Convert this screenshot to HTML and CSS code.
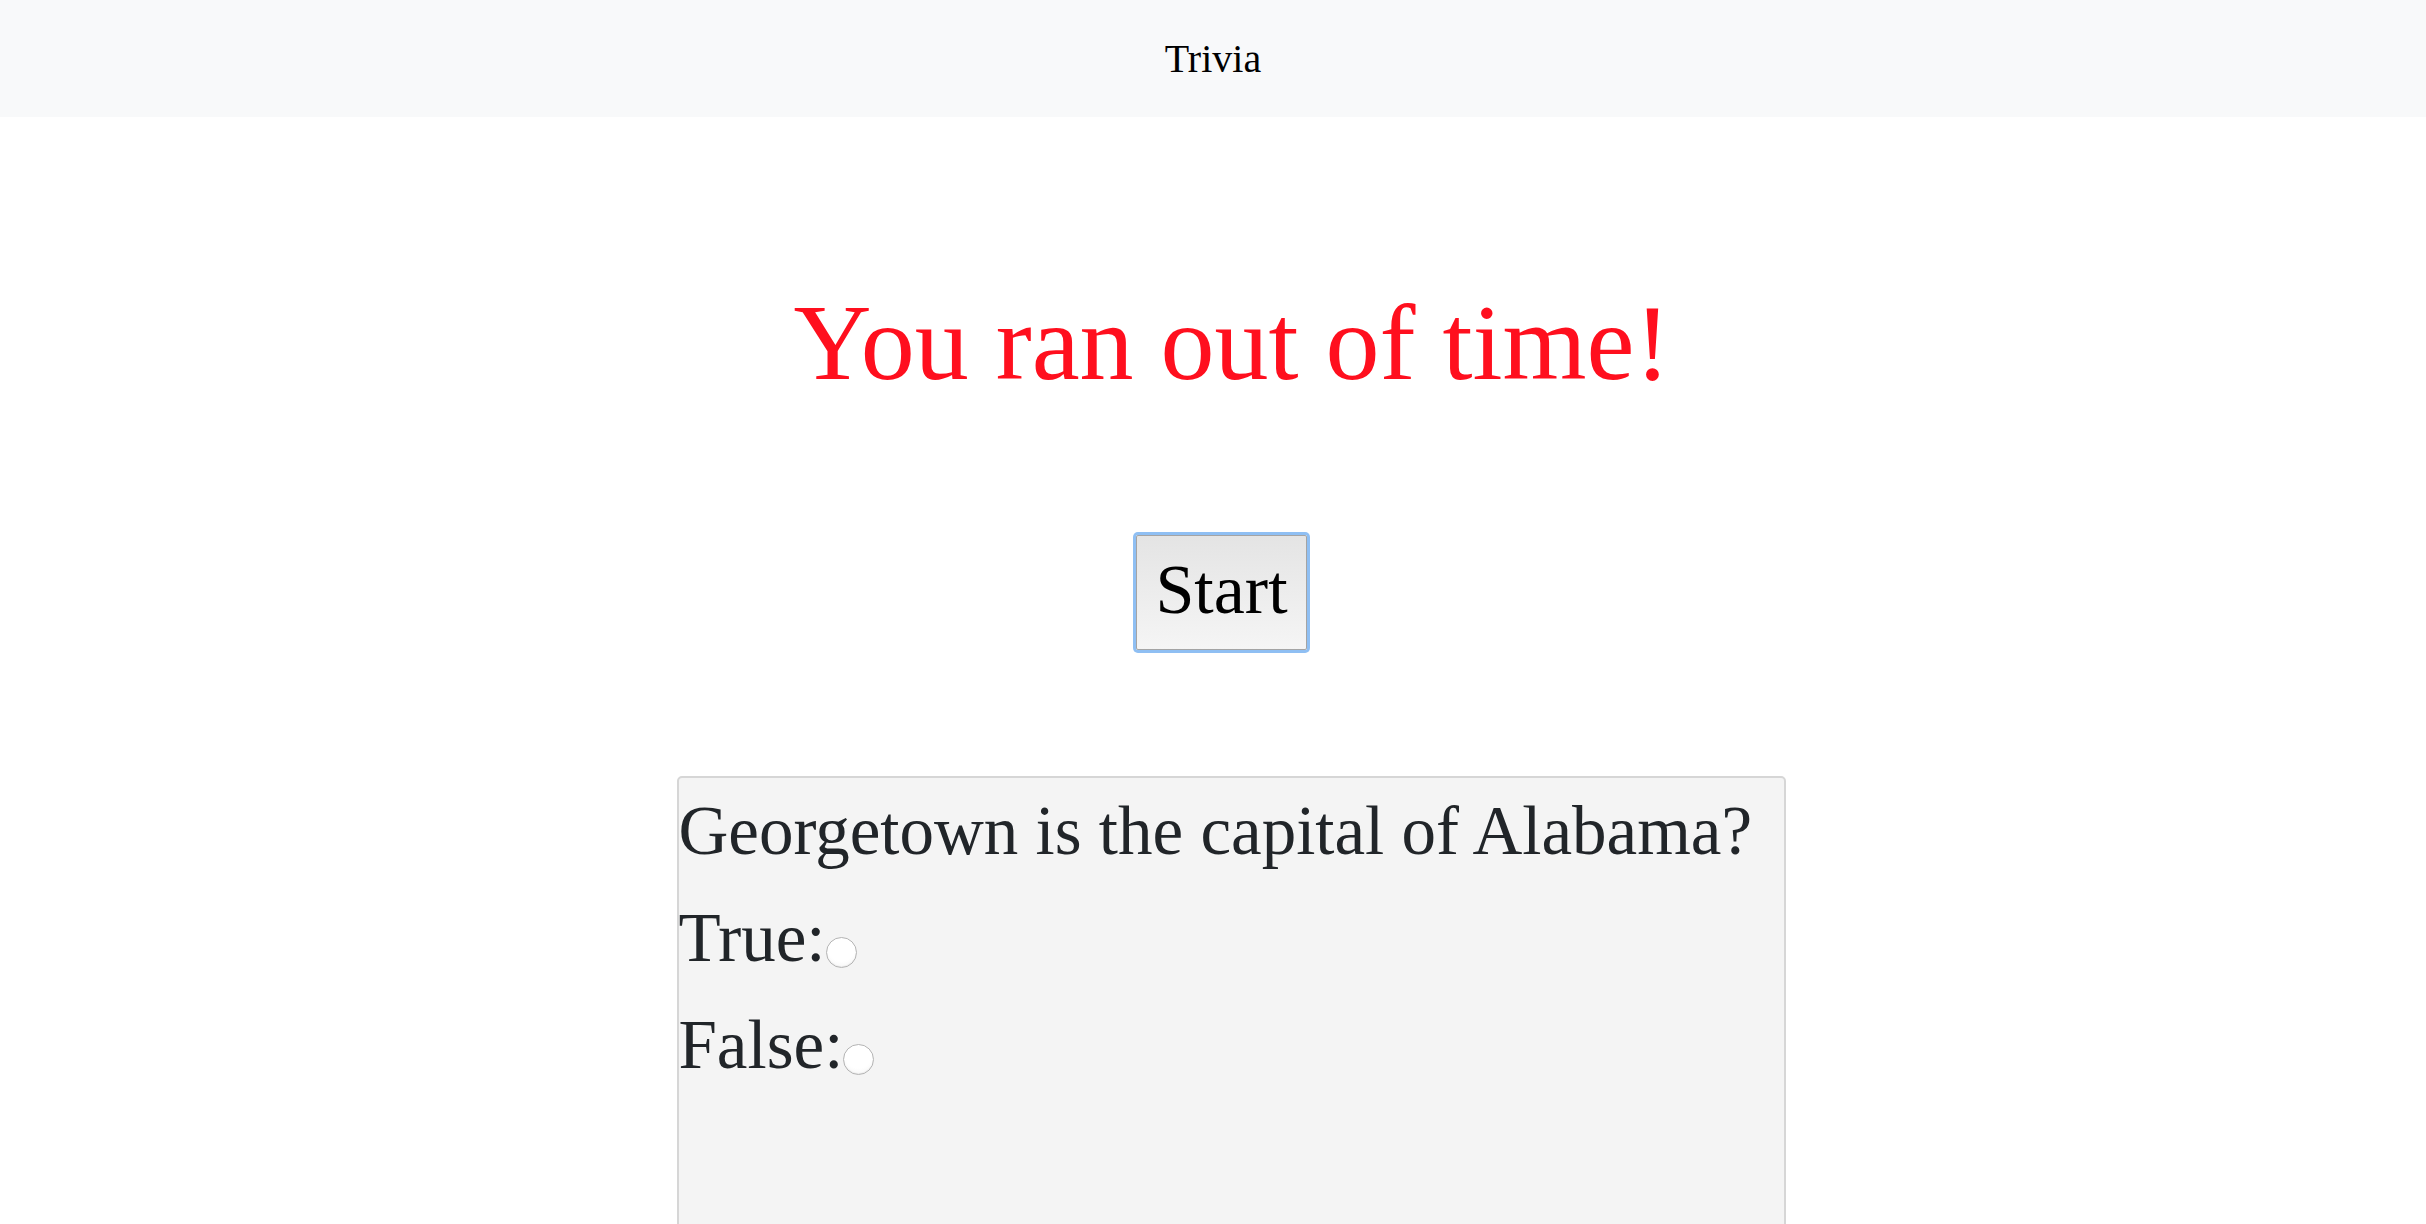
FILE: index.html
```html
<!DOCTYPE html>
<html lang="en">
<head>
<meta charset="utf-8">
<title>Trivia</title>
<link rel="stylesheet" href="styles.css">
</head>
<body>
<header class="topbar">
  <span class="brand">Trivia</span>
</header>
<main class="main">
  <h1 class="timeout">You ran out of time!</h1>
  <div class="start-row">
    <button class="start-btn" type="button">Start</button>
  </div>
  <div class="card-row">
    <section class="card">
      <p class="question">Georgetown is the capital of Alabama?</p>
      <label class="answer">True:<input class="radio" type="radio" name="q1" value="true"></label>
      <label class="answer">False:<input class="radio" type="radio" name="q1" value="false"></label>
    </section>
  </div>
</main>
</body>
</html>
```
FILE: styles.css
```css
html, body {
  margin: 0;
  padding: 0;
  background: #ffffff;
  overflow: hidden;
}

body {
  font-family: "Liberation Serif", "Times New Roman", serif;
  color: #212529;
}

.topbar {
  height: 117px;
  background: #f8f9fa;
  display: flex;
  align-items: center;
  justify-content: center;
}

.brand {
  font-size: 40px;
  line-height: 114px;
  color: #000000;
}

.main {
  padding-left: 38px;
  display: flex;
  flex-direction: column;
  align-items: center;
}

.timeout {
  margin: 162px 0 0;
  font-size: 108px;
  line-height: 128px;
  font-weight: normal;
  color: #ff0f1e;
  text-align: center;
}

.start-row {
  margin-top: 128px;
  display: flex;
  justify-content: center;
  padding-right: 21px;
}

.start-btn {
  font-family: "Liberation Serif", "Times New Roman", serif;
  font-size: 70px;
  line-height: 107px;
  padding: 0 18px 6px;
  color: #000000;
  background: linear-gradient(#e4e4e4, #f5f5f5);
  border: 1px solid #a4a4a4;
  border-radius: 2px;
  box-shadow: 0 0 0 3px #8fbff3;
  cursor: pointer;
}

.card-row {
  align-self: stretch;
  margin-top: 126px;
  display: flex;
  justify-content: center;
  padding-right: 2px;
}

.card {
  width: 1105px;
  min-height: 700px;
  background: #f4f4f4;
  border: 2px solid #d6d6d6;
  border-radius: 5px;
  display: flex;
  flex-direction: column;
}

.question,
.answer {
  margin: 0;
  font-size: 69px;
  line-height: 107px;
  color: #212529;
  display: block;
}

.radio {
  -webkit-appearance: none;
  appearance: none;
  width: 31px;
  height: 31px;
  margin: 0;
  border: 1px solid #b4b4b4;
  border-radius: 50%;
  background: radial-gradient(circle at 50% 35%, #ffffff 55%, #f2f2f2 100%);
  box-shadow: inset 0 -1px 1px rgba(0, 0, 0, 0.06);
  vertical-align: -7px;
  box-sizing: border-box;
}
```
